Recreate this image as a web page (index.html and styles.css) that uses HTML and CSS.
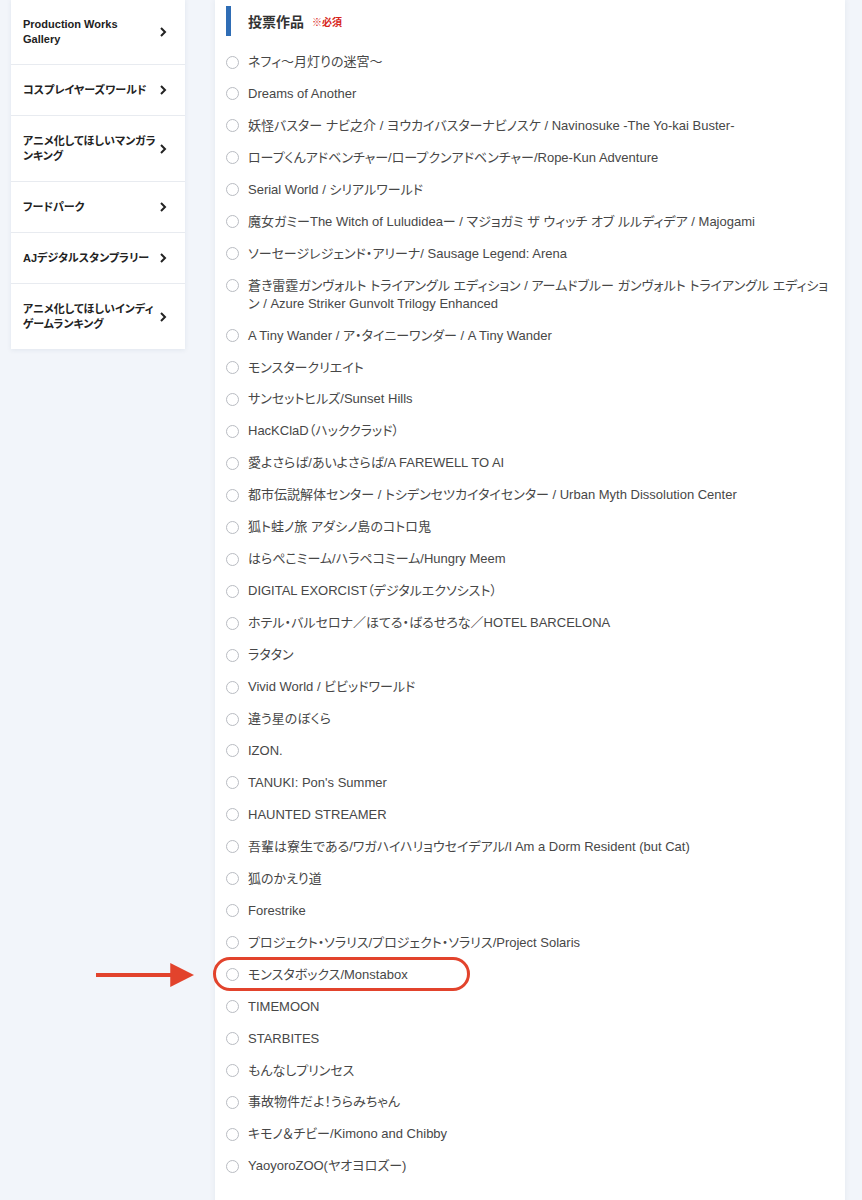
FILE: index.html
```html
<!DOCTYPE html>
<html lang="ja">
<head>
    <meta charset="UTF-8">
    <meta name="viewport" content="width=device-width, initial-scale=1.0">
    <title>投票フォーム</title>
    <link rel="stylesheet" href="styles.css">
</head>
<body>
    <div class="page">
        <nav class="side-menu">
            <a class="menu-item" href="#"><span>Production Works<br>Gallery</span><svg class="chev" viewBox="0 0 8 12"><polyline points="2,2 6,6 2,10"/></svg></a>
            <a class="menu-item" href="#"><span>コスプレイヤーズワールド</span><svg class="chev" viewBox="0 0 8 12"><polyline points="2,2 6,6 2,10"/></svg></a>
            <a class="menu-item" href="#"><span>アニメ化してほしいマンガラ<br>ンキング</span><svg class="chev" viewBox="0 0 8 12"><polyline points="2,2 6,6 2,10"/></svg></a>
            <a class="menu-item" href="#"><span>フードパーク</span><svg class="chev" viewBox="0 0 8 12"><polyline points="2,2 6,6 2,10"/></svg></a>
            <a class="menu-item" href="#"><span>AJデジタルスタンプラリー</span><svg class="chev" viewBox="0 0 8 12"><polyline points="2,2 6,6 2,10"/></svg></a>
            <a class="menu-item" href="#"><span>アニメ化してほしいインディ<br>ゲームランキング</span><svg class="chev" viewBox="0 0 8 12"><polyline points="2,2 6,6 2,10"/></svg></a>
        </nav>

        <main class="panel">
            <h2 class="field-title">投票作品 <span class="required">※必須</span></h2>
            <div class="choices">
                <label class="choice"><input type="radio" name="work"><span>ネフィ〜月灯りの迷宮〜</span></label>
                <label class="choice"><input type="radio" name="work"><span>Dreams of Another</span></label>
                <label class="choice"><input type="radio" name="work"><span>妖怪バスター ナビ之介 / ヨウカイバスターナビノスケ / Navinosuke -The Yo-kai Buster-</span></label>
                <label class="choice"><input type="radio" name="work"><span>ロープくんアドベンチャー/ロープクンアドベンチャー/Rope-Kun Adventure</span></label>
                <label class="choice"><input type="radio" name="work"><span>Serial World / シリアルワールド</span></label>
                <label class="choice"><input type="radio" name="work"><span>魔女ガミーThe Witch of Luludideaー / マジョガミ ザ ウィッチ オブ ルルディデア / Majogami</span></label>
                <label class="choice"><input type="radio" name="work"><span>ソーセージレジェンド・アリーナ/ Sausage Legend: Arena</span></label>
                <label class="choice"><input type="radio" name="work"><span>蒼き雷霆ガンヴォルト トライアングル エディション / アームドブルー ガンヴォルト トライアングル エディション / Azure Striker Gunvolt Trilogy Enhanced</span></label>
                <label class="choice"><input type="radio" name="work"><span>A Tiny Wander / ア・タイニーワンダー / A Tiny Wander</span></label>
                <label class="choice"><input type="radio" name="work"><span>モンスタークリエイト</span></label>
                <label class="choice"><input type="radio" name="work"><span>サンセットヒルズ/Sunset Hills</span></label>
                <label class="choice"><input type="radio" name="work"><span>HacKClaD（ハッククラッド）</span></label>
                <label class="choice"><input type="radio" name="work"><span>愛よさらば/あいよさらば/A FAREWELL TO AI</span></label>
                <label class="choice"><input type="radio" name="work"><span>都市伝説解体センター / トシデンセツカイタイセンター / Urban Myth Dissolution Center</span></label>
                <label class="choice"><input type="radio" name="work"><span>狐ト蛙ノ旅 アダシノ島のコトロ鬼</span></label>
                <label class="choice"><input type="radio" name="work"><span>はらぺこミーム/ハラペコミーム/Hungry Meem</span></label>
                <label class="choice"><input type="radio" name="work"><span>DIGITAL EXORCIST（デジタルエクソシスト）</span></label>
                <label class="choice"><input type="radio" name="work"><span>ホテル・バルセロナ／ほてる・ばるせろな／HOTEL BARCELONA</span></label>
                <label class="choice"><input type="radio" name="work"><span>ラタタン</span></label>
                <label class="choice"><input type="radio" name="work"><span>Vivid World / ビビッドワールド</span></label>
                <label class="choice"><input type="radio" name="work"><span>違う星のぼくら</span></label>
                <label class="choice"><input type="radio" name="work"><span>IZON.</span></label>
                <label class="choice"><input type="radio" name="work"><span>TANUKI: Pon's Summer</span></label>
                <label class="choice"><input type="radio" name="work"><span>HAUNTED STREAMER</span></label>
                <label class="choice"><input type="radio" name="work"><span>吾輩は寮生である/ワガハイハリョウセイデアル/I Am a Dorm Resident (but Cat)</span></label>
                <label class="choice"><input type="radio" name="work"><span>狐のかえり道</span></label>
                <label class="choice"><input type="radio" name="work"><span>Forestrike</span></label>
                <label class="choice"><input type="radio" name="work"><span>プロジェクト・ソラリス/プロジェクト・ソラリス/Project Solaris</span></label>
                <label class="choice marked"><input type="radio" name="work"><span>モンスタボックス/Monstabox</span>
                    <svg class="pointer" viewBox="0 0 100 24"><line x1="0" y1="12" x2="78" y2="12"/><polygon points="75,0 99,12 75,24"/></svg>
                </label>
                <label class="choice"><input type="radio" name="work"><span>TIMEMOON</span></label>
                <label class="choice"><input type="radio" name="work"><span>STARBITES</span></label>
                <label class="choice"><input type="radio" name="work"><span>もんなしプリンセス</span></label>
                <label class="choice"><input type="radio" name="work"><span>事故物件だよ！うらみちゃん</span></label>
                <label class="choice"><input type="radio" name="work"><span>キモノ＆チビー/Kimono and Chibby</span></label>
                <label class="choice"><input type="radio" name="work"><span>YaoyoroZOO(ヤオヨロズー)</span></label>
            </div>
        </main>
    </div>
</body>
</html>
```

FILE: styles.css
```css
body {
    margin: 0;
    background: #f2f5fa;
    font-family: 'Liberation Sans', 'Noto Sans CJK JP', sans-serif;
    font-feature-settings: "palt";
    color: #474747;
}
.page {
    display: flex;
    align-items: flex-start;
    gap: 30px;
    padding: 0 17px 0 11px;
}
.side-menu {
    width: 174px;
    flex-shrink: 0;
    margin-top: -1px;
    background: #fff;
    box-shadow: 0 1px 5px rgba(30, 50, 90, 0.08);
}
.menu-item {
    display: flex;
    align-items: center;
    justify-content: space-between;
    padding: 17.5px 18px 17.5px 12px;
    border-bottom: 1px solid #e8ebf0;
    color: #222;
    text-decoration: none;
    font-size: 11px;
    font-weight: bold;
    line-height: 15px;
}
.menu-item:last-child {
    border-bottom: none;
}
.chev {
    width: 8px;
    height: 12px;
    flex-shrink: 0;
}
.chev polyline {
    fill: none;
    stroke: #222;
    stroke-width: 2;
}
.panel {
    flex: 1;
    min-height: 1240px;
    background: #fff;
    padding: 6px 15px 40px 11px;
    box-shadow: 0 0 6px rgba(30, 50, 90, 0.07);
}
.field-title {
    display: flex;
    align-items: center;
    margin: 0 0 17px;
    height: 30px;
    border-left: 5px solid #2f6db5;
    padding-left: 17px;
    font-size: 14px;
    font-weight: bold;
    color: #333;
}
.required {
    margin-left: 8px;
    font-size: 10px;
    color: #d7261b;
}
.choices {
    display: flex;
    flex-direction: column;
    gap: 14px;
}
.choice {
    position: relative;
    display: flex;
    align-items: flex-start;
    gap: 9px;
    font-size: 13px;
    line-height: 17.95px;
}
.choice input {
    appearance: none;
    -webkit-appearance: none;
    width: 13px;
    height: 13px;
    margin: 2.5px 0 0 0;
    border: 1px solid #b9bcc2;
    border-radius: 50%;
    flex-shrink: 0;
    background: #fff;
}
.marked::after {
    content: '';
    position: absolute;
    left: -13px;
    top: -9px;
    width: 251px;
    height: 28px;
    border: 3px solid #e2432c;
    border-radius: 17px;
    pointer-events: none;
}
.pointer {
    position: absolute;
    left: -130px;
    top: -3px;
    width: 99px;
    height: 24px;
}
.pointer line {
    stroke: #e2432c;
    stroke-width: 4;
}
.pointer polygon {
    fill: #e2432c;
}
```
